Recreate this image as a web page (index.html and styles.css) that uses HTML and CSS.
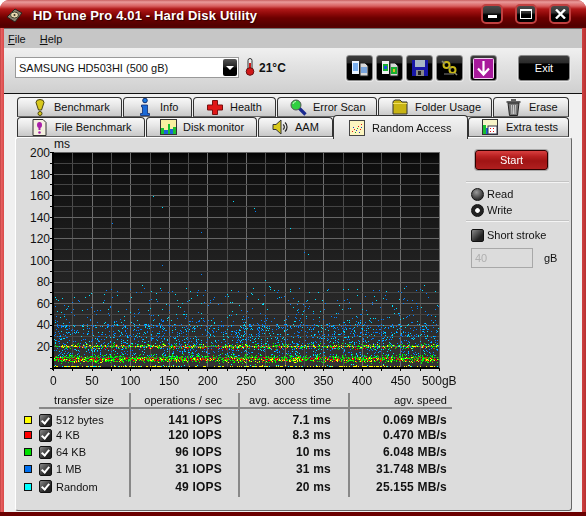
FILE: index.html
```html
<!DOCTYPE html>
<html lang="en">
<head>
    <meta charset="UTF-8">
    <meta name="viewport" content="width=device-width, initial-scale=1.0">
    <link rel="stylesheet" href="styles.css">
    <title>HD Tune Pro 4.01 - Hard Disk Utility</title>
</head>
<body>
<div class="window">
  <div class="titlebar">
    <svg class="app-icon" width="17" height="17" viewBox="0 0 17 17">
      <path d="M1 10 9 2l7 4-7 9z" fill="#8a8272" stroke="#2a2018"/>
      <ellipse cx="8.500" cy="8" rx="4" ry="3" fill="#e8d8b0" stroke="#443"/>
      <circle cx="8.500" cy="8" r="1" fill="#332"/>
    </svg>
    <span class="title-text">HD Tune Pro 4.01 - Hard Disk Utility</span>
    <div class="win-buttons">
      <button class="win-btn"><span class="glyph-min"></span></button>
      <button class="win-btn"><span class="glyph-max"></span></button>
      <button class="win-btn">
        <svg width="11" height="10" viewBox="0 0 11 10"><path d="M1 0.500 10 9.500M10 0.500 1 9.500" stroke="#fff" stroke-width="2.400"/></svg>
      </button>
    </div>
  </div>

  <div class="client">
    <div class="menubar">
      <span class="menu-item"><u>F</u>ile</span>
      <span class="menu-item"><u>H</u>elp</span>
    </div>

    <div class="toolbar">
      <div class="combo">
        <span class="combo-text">SAMSUNG HD503HI (500 gB)</span>
        <span class="combo-arrow"></span>
      </div>
      <svg class="thermo" width="10" height="18" viewBox="0 0 10 18">
        <rect x="3" y="0.500" width="4" height="12" rx="2" fill="#eee" stroke="#333"/>
        <rect x="4" y="5" width="2" height="8" fill="#d01818"/>
        <circle cx="5" cy="13.500" r="3.800" fill="#d01818" stroke="#611"/>
      </svg>
      <span class="temp">21°C</span>
      <div class="tool-group">
        <button class="tool-btn">
          <svg width="18" height="17" viewBox="0 0 18 17">
            <path d="M1 1h7v13H1z" fill="#eaf4ff"/>
            <path d="M2 4h5M2 6h5M2 8h5M2 10h5" stroke="#0a6ae0" stroke-width="1.200"/>
            <path d="M9 3h5l3 3v10H9z" fill="#d8d8d8" stroke="#222"/>
            <path d="M10 8h6M10 10h6M10 12h6" stroke="#1a70e0"/>
          </svg>
        </button>
        <button class="tool-btn">
          <svg width="18" height="17" viewBox="0 0 18 17">
            <path d="M1 1h7v13H1z" fill="#eee"/>
            <rect x="2" y="4" width="5" height="7" fill="#18b030"/>
            <rect x="3" y="6" width="3" height="3" fill="#1a50e0"/>
            <path d="M9 3h5l3 3v10H9z" fill="#d8d8d8" stroke="#222"/>
            <rect x="10" y="7" width="6" height="7" fill="#18b030"/>
            <rect x="12" y="9" width="2" height="3" fill="#d8c020"/>
          </svg>
        </button>
        <button class="tool-btn">
          <svg width="16" height="16" viewBox="0 0 16 16">
            <path d="M0 0h16v16H0z" fill="#1818a8"/>
            <rect x="3" y="0" width="10" height="7" fill="#a8b8c8"/>
            <rect x="4" y="10" width="8" height="6" fill="#888"/>
            <rect x="6" y="11" width="3" height="4" fill="#222"/>
          </svg>
        </button>
        <button class="tool-btn">
          <svg width="17" height="16" viewBox="0 0 17 16">
            <circle cx="5.500" cy="5" r="3" fill="none" stroke="#c8b818" stroke-width="2"/>
            <circle cx="11.500" cy="10" r="3" fill="none" stroke="#c8b818" stroke-width="2"/>
            <path d="M1 1l3 3M8 7l2 2M14 13l2 2" stroke="#8a8a70" stroke-width="1.500"/>
            <path d="M3 14h10" stroke="#555" stroke-width="1.500"/>
          </svg>
        </button>
        <button class="tool-btn tool-btn-down">
          <svg width="21" height="21" viewBox="0 0 21 21">
            <rect x="0.500" y="0.500" width="20" height="20" rx="1" fill="#a81a9c" stroke="#f0d0f0"/>
            <path d="M10.500 3v13M5 10.500l5.500 6 5.500-6" fill="none" stroke="#fff" stroke-width="2.200"/>
          </svg>
        </button>
        <button class="tool-btn tool-btn-exit">Exit</button>
      </div>
    </div>

    <div class="tabs">
      <div class="tab-row">
        <div class="tab tab-benchmark">
          <svg width="10" height="17" viewBox="0 0 10 17">
            <path d="M1 3.500a4 3 0 0 1 8 0L6.500 11h-3z" fill="#d8c81c" stroke="#4a4410"/>
            <circle cx="5" cy="14.500" r="2" fill="#d8c81c" stroke="#4a4410"/>
          </svg>
          <span>Benchmark</span>
        </div>
        <div class="tab tab-info">
          <svg width="10" height="18" viewBox="0 0 10 18">
            <circle cx="5" cy="2.500" r="2.300" fill="#1a7ae0" stroke="#0c2a70"/>
            <path d="M1.500 7h6v8.500h2v2H.5v-2h2V9h-1z" fill="#1a6ad8" stroke="#0c2a70" stroke-width=".8"/>
          </svg>
          <span>Info</span>
        </div>
        <div class="tab tab-health">
          <svg width="16" height="15" viewBox="0 0 16 15">
            <path d="M5.500.5h5v4.500h5v5h-5v4.500h-5V10H.5V5h5z" fill="#e01818" stroke="#7a1010"/>
          </svg>
          <span>Health</span>
        </div>
        <div class="tab tab-scan">
          <svg width="17" height="17" viewBox="0 0 17 17">
            <path d="M9 9l6.500 6.500" stroke="#1a2a90" stroke-width="3.200"/>
            <circle cx="6" cy="6" r="5" fill="#30d040" stroke="#555"/>
            <path d="M3 5a3 3 0 0 1 3-2.500" stroke="#c8f8c8" fill="none"/>
          </svg>
          <span>Error Scan</span>
        </div>
        <div class="tab tab-folder">
          <svg width="16" height="16" viewBox="0 0 16 16">
            <path d="M1 15V2.500L3 1h5l2 2h5v12z" fill="#c8b414" stroke="#333"/>
            <path d="M1 4.500h14" stroke="#f0e060"/>
          </svg>
          <span>Folder Usage</span>
        </div>
        <div class="tab tab-erase">
          <svg width="15" height="17" viewBox="0 0 15 17">
            <path d="M2 4h11l-1.500 12.500h-8z" fill="#777" stroke="#222"/>
            <path d="M.5 3h14M5 1h5" stroke="#333" stroke-width="1.500"/>
            <path d="M5.500 6l.5 9M7.500 6v9M9.500 6l-.5 9" stroke="#ccc"/>
          </svg>
          <span>Erase</span>
        </div>
      </div>
      <div class="tab-row">
        <div class="tab tab-filebench">
          <svg width="15" height="17" viewBox="0 0 15 17">
            <path d="M1 .5h10l3 3v13H1z" fill="#f4f0e0" stroke="#333"/>
            <ellipse cx="7.500" cy="6" rx="2.500" ry="3" fill="#a820a8"/>
            <path d="M7.500 8v3" stroke="#a820a8" stroke-width="2"/>
            <circle cx="7.500" cy="13.500" r="1.300" fill="#a820a8"/>
          </svg>
          <span>File Benchmark</span>
        </div>
        <div class="tab tab-disk">
          <svg width="17" height="16" viewBox="0 0 17 16">
            <rect x=".5" y=".5" width="16" height="15" fill="#f8f0a0" stroke="#333"/>
            <path d="M1 15V9h3v6zM8 15V5h2v10zM13 15V8h3v7z" fill="#18c030"/>
            <path d="M4 15v-4h4v4zM10 15v-5h3v5z" fill="#2060d8"/>
          </svg>
          <span>Disk monitor</span>
        </div>
        <div class="tab tab-aam">
          <svg width="17" height="16" viewBox="0 0 17 16">
            <path d="M1 5.500h3L9 1v14l-5-4.500H1z" fill="#d8c81c" stroke="#333"/>
            <path d="M11 5.500a3 3 0 0 1 0 5M13 3.500a6 6 0 0 1 0 9" fill="none" stroke="#222" stroke-width="1.200"/>
          </svg>
          <span>AAM</span>
        </div>
        <div class="tab tab-random tab-active">
          <svg width="16" height="16" viewBox="0 0 16 16">
            <rect x=".5" y=".5" width="15" height="15" fill="#fdf6c0" stroke="#444"/>
            <path d="M3 11h1v1H3zM5 9h1v1H5zM9 6h1v1H9zM12 4h1v1h-1zM11 9h1v1h-1z" fill="#e01818"/>
            <path d="M4 7h1v1H4zM7 10h1v1H7zM10 12h1v1h-1zM12 7h1v1h-1z" fill="#2040d0"/>
            <path d="M6 12h1v1H6zM8 8h1v1H8z" fill="#18a030"/>
          </svg>
          <span>Random Access</span>
        </div>
        <div class="tab tab-extra">
          <svg width="16" height="16" viewBox="0 0 16 16">
            <rect x=".5" y=".5" width="15" height="15" fill="#f8f4c8" stroke="#333"/>
            <path d="M1 15V6h3v9z" fill="#18c030"/>
            <path d="M4 15V9h2v6z" fill="#2060d8"/>
            <rect x="6" y="7" width="9" height="8" fill="#fff" stroke="#334"/>
            <path d="M8 9h1v1H8zM11 9h1v1h-1zM8 12h1v1H8zM11 12h1v1h-1z" fill="#e01818"/>
          </svg>
          <span>Extra tests</span>
        </div>
      </div>
    </div>

    <div class="panel">
      <div class="panel-top">
        <div class="chart">
          <div class="ms-label">ms</div>
          <div class="chart-body">
            <div class="y-axis">
              <span>200</span><span>180</span><span>160</span><span>140</span><span>120</span>
              <span>100</span><span>80</span><span>60</span><span>40</span><span>20</span>
            </div>
            <canvas id="plot" class="plot" width="391" height="222"></canvas>
          </div>
          <div class="x-axis">
            <span>0</span><span>50</span><span>100</span><span>150</span><span>200</span><span>250</span>
            <span>300</span><span>350</span><span>400</span><span>450</span><span>500gB</span>
          </div>
        </div>

        <div class="side">
          <button class="start-btn">Start</button>
          <div class="divider"></div>
          <div class="option"><span class="radio"></span>Read</div>
          <div class="option"><span class="radio radio-on"></span>Write</div>
          <div class="divider divider-low"></div>
          <div class="option option-stroke"><span class="check-off"></span>Short stroke</div>
          <div class="stroke-row">
            <input class="stroke-input" value="40" disabled>
            <span>gB</span>
          </div>
        </div>
      </div>

      <div class="results">
        <div class="head head-first">transfer size</div>
        <div class="head col-ops">operations / sec</div>
        <div class="head col-time">avg. access time</div>
        <div class="head col-speed">agv. speed</div>
        <div class="rule"></div>

        <span class="swatch swatch-yellow"></span>
        <div class="cell-name"><span class="check"></span>512 bytes</div>
        <div class="cell col-ops">141 IOPS</div><div class="cell col-time">7.1 ms</div><div class="cell col-speed">0.069 MB/s</div>

        <span class="swatch swatch-red"></span>
        <div class="cell-name"><span class="check"></span>4 KB</div>
        <div class="cell col-ops">120 IOPS</div><div class="cell col-time">8.3 ms</div><div class="cell col-speed">0.470 MB/s</div>

        <span class="swatch swatch-green"></span>
        <div class="cell-name"><span class="check"></span>64 KB</div>
        <div class="cell col-ops">96 IOPS</div><div class="cell col-time">10 ms</div><div class="cell col-speed">6.048 MB/s</div>

        <span class="swatch swatch-blue"></span>
        <div class="cell-name"><span class="check"></span>1 MB</div>
        <div class="cell col-ops">31 IOPS</div><div class="cell col-time">31 ms</div><div class="cell col-speed">31.748 MB/s</div>

        <span class="swatch swatch-cyan"></span>
        <div class="cell-name"><span class="check"></span>Random</div>
        <div class="cell col-ops">49 IOPS</div><div class="cell col-time">20 ms</div><div class="cell col-speed">25.155 MB/s</div>
      </div>
    </div>
  </div>
</div>
<script src="script.js"></script>
</body>
</html>
```

FILE: styles.css
```css
html,body {
  margin: 0;
  padding: 0;
  height: 100%;
  background-color: #ffffff;
  overflow: hidden;
}
body {
  font-family: "Liberation Sans", Arial, sans-serif;
  font-size: 11px;
  color: #111111;
}
button {
  font-family: inherit;
  padding: 0;
  margin: 0;
}
.window {
  width: 586px;
  height: 516px;
  display: flex;
  flex-direction: column;
  box-sizing: border-box;
  border-radius: 9px 9px 0 0;
  background: linear-gradient(90deg, #b03030 0, #e86464 1px, #d84848 4px, #8a0000 50%, #d84848 99%, #b83030 100%);
  border-bottom: 4px solid #6a0000;
  overflow: hidden;
}

/* title bar */
.titlebar {
  height: 28px;
  flex: none;
  display: flex;
  align-items: center;
  padding: 0 15px 0 6px;
  box-sizing: border-box;
  background: linear-gradient(180deg, #c86060 0, #ea9a9a 2px, #d86060 6px, #b01818 9px, #8c0808 14px, #6c0000 18px, #500000 26px, #600000 28px);
}
.app-icon {
  flex: none;
  margin-top: 3px;
}
.title-text {
  margin-left: 10px;
  margin-top: 3px;
  font-size: 13px;
  font-weight: bold;
  letter-spacing: .15px;
  color: #ffffff;
  text-shadow: 1px 1px 1px #300000;
}
.win-buttons {
  margin-left: auto;
  display: flex;
  gap: 12px;
}
.win-btn {
  width: 22px;
  height: 20px;
  box-sizing: border-box;
  display: flex;
  align-items: center;
  justify-content: center;
  border: 2px solid #c04040;
  border-radius: 5px;
  background: linear-gradient(180deg, #4a4a4a 0, #333333 40%, #000000 55%);
}
.glyph-min {
  width: 9px;
  height: 3px;
  margin-top: 5px;
  background-color: #ffffff;
}
.glyph-max {
  width: 10px;
  height: 7px;
  border: 1px solid #ffffff;
  border-top-width: 2px;
}

.client {
  flex: 1;
  display: flex;
  flex-direction: column;
  margin: 0 4px 0 4px;
  background-color: #f0f0f0;
}

.menubar {
  height: 20px;
  flex: none;
  display: flex;
  align-items: center;
  gap: 14px;
  padding-left: 4px;
  box-sizing: border-box;
  border-top: 1px solid #707070;
  background-color: #c6c6c6;
}
.toolbar {
  height: 46px;
  flex: none;
  box-sizing: border-box;
  display: flex;
  align-items: flex-start;
  padding: 7px 12px 0 11px;
  border-bottom: 1px solid #111111;
  background: linear-gradient(180deg, #f0f0f0 0, #e2e2e2 40%, #cfcfcf 100%);
}
.combo {
  width: 224px;
  height: 21px;
  margin-top: 2px;
  box-sizing: border-box;
  display: flex;
  align-items: center;
  justify-content: space-between;
  padding: 0 1px 0 3px;
  border: 1px solid #999999;
  background-color: #ffffff;
}
.combo-arrow {
  width: 14px;
  height: 17px;
  border-radius: 2px;
  background: linear-gradient(180deg, #555555 0, #222222 45%, #000000 55%);
  position: relative;
}
.combo-arrow::after {
  content: '';
  position: absolute;
  left: 3px;
  top: 7px;
  border: 4px solid transparent;
  border-top: 4px solid #ffffff;
}
.thermo {
  margin: 3px 0 0 6px;
  flex: none;
}
.temp {
  margin: 6px 0 0 4px;
  font-weight: bold;
  font-size: 12px;
}
.tool-group {
  margin-left: auto;
  display: flex;
  align-items: flex-start;
  gap: 3px;
}
.tool-btn {
  width: 27px;
  height: 26px;
  box-sizing: border-box;
  display: flex;
  align-items: center;
  justify-content: center;
  border: 1px solid #8a8a8a;
  border-radius: 3px;
  box-shadow: 0 0 0 1px #e8e8e8;
  background: linear-gradient(180deg, #3c3c3c 0, #2a2a2a 30%, #000000 32%);
}
.tool-btn-down {
  margin-left: 4px;
}
.tool-btn-exit {
  width: 52px;
  margin-left: 18px;
  color: #ffffff;
  font-size: 11px;
}

/* tabs */
.tabs {
  flex: none;
  height: 43px;
  padding: 3px 0 0 13px;
  box-sizing: border-box;
}
.tab-row {
  height: 20px;
  display: flex;
  gap: 1px;
}
.tab {
  height: 20px;
  box-sizing: border-box;
  display: flex;
  align-items: center;
  border: 1px solid #333333;
  border-bottom: 1px solid #666666;
  border-radius: 4px 4px 0 0;
  background: linear-gradient(180deg, #f8f8f8 0, #e8e8e8 40%, #c8c8c8 100%);
}
.tab-active {
  height: 24px;
  margin: -2px -1px 0 -1px;
  border-bottom: none;
  background: linear-gradient(180deg, #f4f4f4 0, #dcdcdc 100%);
  position: relative;
  z-index: 2;
}
.tab-benchmark { width: 105px; padding-left: 17px; gap: 9px; }
.tab-info { width: 69px; padding-left: 16px; gap: 10px; }
.tab-health { width: 83px; padding-left: 13px; gap: 7px; }
.tab-scan { width: 100px; padding-left: 12px; gap: 6px; }
.tab-folder { width: 114px; padding-left: 13px; gap: 7px; }
.tab-erase { width: 76px; padding-left: 12px; gap: 8px; }
.tab-filebench { width: 128px; padding-left: 14px; gap: 8px; }
.tab-disk { width: 111px; padding-left: 13px; gap: 6px; }
.tab-aam { width: 75px; padding-left: 13px; gap: 6px; }
.tab-random { width: 135px; padding-left: 15px; gap: 7px; }
.tab-extra { width: 101px; padding-left: 13px; gap: 8px; }

/* main panel */
.panel {
  width: 557px;
  height: 374px;
  flex: none;
  margin-left: 11px;
  box-sizing: border-box;
  display: flex;
  flex-direction: column;
  border: 1px solid #ffffff;
  border-right: 1px solid #666666;
  border-bottom: 1px solid #666666;
  border-radius: 3px;
  background-color: #dcdcdc;
}
.panel-top {
  display: flex;
  height: 255px;
  flex: none;
}
.chart {
  width: 450px;
  flex: none;
  font-size: 12px;
}
.ms-label {
  height: 12px;
  padding-left: 38px;
  box-sizing: border-box;
  line-height: 12px;
}
.chart-body {
  display: flex;
  height: 222px;
}
.y-axis {
  width: 34px;
  flex: none;
  display: grid;
  grid-auto-rows: 21.5px;
  margin-top: -7px;
  text-align: right;
  line-height: 21.5px;
}
.plot {
  display: block;
  width: 391px;
  height: 222px;
}
.x-axis {
  display: grid;
  grid-template-columns: repeat(11, 38.6px);
  margin: 2px 0 0 18px;
  text-align: center;
  line-height: 14px;
}

.side {
  width: 105px;
  flex: none;
  padding-top: 12px;
}
.start-btn {
  display: block;
  width: 73px;
  height: 20px;
  margin-left: 9px;
  box-sizing: border-box;
  color: #ffffff;
  font-size: 11px;
  border: 1px solid #300000;
  border-radius: 3px;
  box-shadow: 0 0 0 1px #a8a8a8;
  background: linear-gradient(180deg, #d84040 0, #b82020 30%, #a01414 55%, #b02020 100%);
}
.divider {
  height: 1px;
  margin: 12px 2px 3px 0;
  background-color: #f4f4f4;
  box-shadow: 0 -1px 0 #c4c4c4;
}
.divider-low {
  margin: 3px 2px 6px 0;
}
.option {
  height: 16px;
  display: flex;
  align-items: center;
  gap: 3px;
  padding-left: 5px;
}
.option-stroke {
  height: 14px;
}
.radio {
  width: 13px;
  height: 13px;
  box-sizing: border-box;
  border-radius: 50%;
  border: 1px solid #111111;
  background: radial-gradient(circle at 40% 30%, #9a9a9a 0, #333333 70%);
}
.radio-on {
  background: radial-gradient(circle, #ffffff 0, #ffffff 25%, #222222 35%);
}
.check-off {
  width: 13px;
  height: 13px;
  box-sizing: border-box;
  border: 1px solid #111111;
  border-radius: 2px;
  background: linear-gradient(135deg, #8a8a8a 0, #222222 70%);
}
.stroke-row {
  display: flex;
  align-items: center;
  gap: 11px;
  margin: 6px 0 0 5px;
}
.stroke-input {
  width: 62px;
  height: 20px;
  box-sizing: border-box;
  padding: 0 3px;
  font-family: inherit;
  font-size: 11px;
  color: #b0b0b0;
  border: 1px solid #a8a8a8;
  background-color: #dcdcdc;
}

/* results table, the column lines are background layers of the grid */
.results {
  display: grid;
  grid-template-columns: 15px 91px 109px 110px 103px;
  grid-template-rows: 14px 5px 16px 14px 20px 14px 21px;
  margin-left: 8px;
  background:
    linear-gradient(#888888, #888888) 105px 0 / 2px 104px no-repeat,
    linear-gradient(#888888, #888888) 214px 0 / 2px 104px no-repeat,
    linear-gradient(#888888, #888888) 324px 0 / 2px 104px no-repeat;
}
.head {
  text-align: right;
  line-height: 14px;
  box-sizing: border-box;
}
.head-first {
  grid-column: 2;
  padding-right: 16px;
}
.col-ops { padding-right: 17px; }
.col-time { padding-right: 18px; }
.col-speed { padding-right: 5px; }
.rule {
  grid-column: 2 / -1;
  height: 2px;
  background-color: #888888;
}
.swatch {
  width: 6px;
  height: 6px;
  align-self: center;
  border: 1px solid #111111;
}
.swatch-yellow { background-color: #ffff00; }
.swatch-red { background-color: #ff0000; }
.swatch-green { background-color: #00e000; }
.swatch-blue { background-color: #0070f0; }
.swatch-cyan { background-color: #00ffff; }
.cell-name {
  display: flex;
  align-items: center;
  gap: 4px;
}
.check {
  width: 13px;
  height: 13px;
  flex: none;
  box-sizing: border-box;
  border: 1px solid #111111;
  border-radius: 2px;
  background: linear-gradient(135deg, #8a8a8a 0, #222222 70%);
  position: relative;
}
.check::after {
  content: '';
  position: absolute;
  left: 3px;
  top: 1px;
  width: 3px;
  height: 6px;
  border: solid #ffffff;
  border-width: 0 2px 2px 0;
  transform: rotate(40deg);
}
.cell {
  display: flex;
  align-items: center;
  justify-content: flex-end;
  box-sizing: border-box;
  font-size: 12px;
  font-weight: bold;
  letter-spacing: .2px;
}
```

FILE: script.js
```js
const canvas = document.getElementById('plot');
const ctx = canvas.getContext('2d');

const X0 = 3, Y0 = 2, W = 386, H = 216;

//seeded random, so the picture is the same on every load
let seed = 20511;
function rnd() {
  seed = (seed + 0x6D2B79F5) | 0;
  let t = Math.imul(seed ^ (seed >>> 15), 1 | seed);
  t = (t + Math.imul(t ^ (t >>> 7), 61 | t)) ^ t;
  return ((t ^ (t >>> 14)) >>> 0) / 4294967296;
}
function gauss() {
  return (rnd() + rnd() + rnd() + rnd() - 2) / 0.58;
}

const bg = ctx.createLinearGradient(0, Y0, 0, Y0 + H);
bg.addColorStop(0, '#000000');
bg.addColorStop(0.04, '#0e0e0e');
bg.addColorStop(1, '#333333');
ctx.fillStyle = bg;
ctx.fillRect(X0, Y0, W, H);

//grid
for (let i = 1; i <= 20; i++) {
  const x = X0 + Math.round(i * W / 20);
  ctx.fillStyle = i % 2 ? '#4c4c4c' : '#6e6e6e';
  ctx.fillRect(x, Y0, 1, H);
}
for (let i = 0; i < 20; i++) {
  const y = Y0 + Math.round(i * H / 20);
  ctx.fillStyle = i % 2 ? '#444444' : '#666666';
  ctx.fillRect(X0, y, W, 1);
}

function dot(ms, color) {
  const x = X0 + Math.floor(rnd() * W);
  const y = Y0 + H - 1 - Math.round(ms * 1.08);
  if (y < Y0) return;
  ctx.fillStyle = color;
  ctx.fillRect(x, y, 1, 1);
}

//far seeks, long tail
function seek(color, n) {
  for (let i = 0; i < n; i++) {
    const r = rnd();
    let ms;
    if (r < 0.76) ms = 10 + rnd() * 30;
    else if (r < 0.985) ms = 38 + Math.pow(rnd(), 1.6) * 35;
    else ms = 70 + Math.pow(rnd(), 2) * 90;
    dot(ms, color);
  }
}
seek('#00e0ff', 850);
seek('#0080ff', 1200);

function band(color, n, center, spread) {
  for (let i = 0; i < n; i++) dot(Math.max(0.5, center + gauss() * spread), color);
}
band('#00ff00', 1250, 8, 1.7);
band('#00ff00', 340, 19.5, 1.1);
band('#ff0000', 380, 7.5, 1);
band('#ff0000', 110, 18.5, 0.9);
band('#ffff00', 200, 7, 1.2);
band('#ffff00', 180, 19.5, 0.8);
band('#ffff00', 240, 0.8, 0.3);
band('#00ffff', 50, 1.2, 0.8);

//axes and ticks
ctx.fillStyle = '#000000';
ctx.fillRect(X0 - 1, Y0, 2, H + 2);
ctx.fillRect(X0 - 1, Y0 + H - 1, W + 1, 2);
for (let i = 0; i <= 20; i++) {
  const y = Y0 + Math.round(i * H / 20);
  ctx.fillRect(0, y, X0, 1);
}
for (let i = 0; i <= 20; i++) {
  const x = X0 + Math.round(i * W / 20);
  ctx.fillRect(x, Y0 + H, 1, 3);
}
```
